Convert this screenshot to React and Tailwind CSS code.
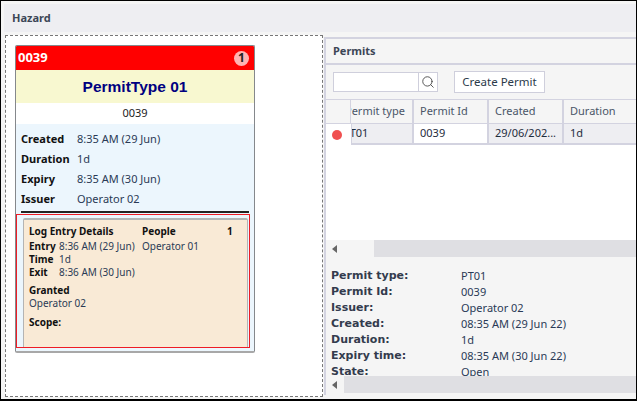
import { Search } from 'lucide-react'

function InfoRow({ label, value }) {
  return (
    <div className="flex h-[20px] items-center">
      <div className="w-[56px] font-bold text-[#111]">{label}</div>
      <div className="text-[#2a3a55]">{value}</div>
    </div>
  )
}

function LogRow({ label, value, h = 'h-[13px]' }) {
  return (
    <div className={`flex items-center ${h}`}>
      <div className="w-[30px] font-bold text-[#111]">{label}</div>
      <div className="text-[#2a3a55]">{value}</div>
    </div>
  )
}

function PermitCard() {
  return (
    <div className="ml-[9px] mt-[9px] w-[240px] h-[308px] rounded-[2px] border border-[#85888c] border-b-2 border-b-[#a8a8a8] bg-[#ecf6fd] flex flex-col overflow-hidden">
      <div className="h-[24px] bg-[#ff0000] flex items-center justify-between pl-[2px] pr-[5px]">
        <span className="text-[13px] font-bold text-white">0039</span>
        <span className="w-[15px] h-[15px] rounded-full bg-[#ffb3b3] flex items-center justify-center text-[12px] font-bold text-[#222]">1</span>
      </div>
      <div className="h-[33px] bg-[#f8f8d0] flex items-center justify-center font-['Liberation_Sans',sans-serif] text-[15.5px] font-bold text-[#000080]">
        PermitType 01
      </div>
      <div className="h-[21px] bg-white flex items-center justify-center text-[#222]">0039</div>
      <div className="px-[5px] pt-[5px] text-[11px]">
        <InfoRow label="Created" value="8:35 AM (29 Jun)" />
        <InfoRow label="Duration" value="1d" />
        <InfoRow label="Expiry" value="8:35 AM (30 Jun)" />
        <InfoRow label="Issuer" value="Operator 02" />
      </div>
      <div className="mx-[5px] mt-[2px] h-[2px] bg-[#222]" />
      <div className="mx-[0px] mt-[1px] h-[134px] border border-[#ee1c25] mr-[4px] pl-[6px] pr-[1px] pt-[3px]">
        <div className="h-full rounded-t-[2px] border border-b-0 border-[#b4b4b4] border-t-2 bg-[#f9ead6] px-[5px] pt-[4px] text-[10px] flex flex-col">
          <div className="flex font-bold text-[#111] h-[14px] items-center">
            <div className="w-[113px]">Log Entry Details</div>
            <div className="w-[85px]">People</div>
            <div>1</div>
          </div>
          <div className="flex mt-[2px]">
            <div className="w-[113px]">
              <LogRow label="Entry" value="8:36 AM (29 Jun)" />
              <LogRow label="Time" value="1d" />
              <LogRow label="Exit" value="8:36 AM (30 Jun)" />
            </div>
            <div className="text-[#2a3a55] h-[13px] flex items-center">Operator 01</div>
          </div>
          <div className="mt-[5px] font-bold text-[#111] h-[13px] flex items-center">Granted</div>
          <div className="text-[#2a3a55] h-[13px] flex items-center">Operator 02</div>
          <div className="mt-[6px] font-bold text-[#111] h-[13px] flex items-center">Scope:</div>
        </div>
      </div>
    </div>
  )
}

function GridCell({ w, children, active }) {
  return (
    <div className={`${w} h-full shrink-0 border-r-2 border-[#d3d3e0] flex items-center overflow-hidden whitespace-nowrap pl-[6px] ${active ? 'bg-white' : ''}`}>
      {children}
    </div>
  )
}

function DetailRow({ label, value }) {
  return (
    <div className="flex h-[16px] items-center">
      <div className="w-[130px] font-['DejaVu_Sans',sans-serif] text-[11px] font-bold text-[#333b4d]">{label}</div>
      <div className="text-[#2a3a55]">{value}</div>
    </div>
  )
}

function PermitsPanel() {
  return (
    <div className="ml-[1px] mt-[2px] flex-1 h-[358px] border-l-2 border-t-2 border-[#d3d3e0] bg-[#f5f5f5] flex flex-col overflow-hidden">
      <div className="h-[26px] shrink-0 border-b-2 border-[#d3d3e0] flex items-center pl-[7px] text-[11px] font-bold text-[#3c4656]">Permits</div>
      <div className="h-[34px] shrink-0 flex items-center pl-[7px] gap-[16px]">
        <div className="flex w-[105px] h-[20px] border border-[#cfcfdc] bg-white">
          <div className="flex-1 border-r border-[#cfcfdc]" />
          <div className="w-[18px] flex items-center justify-center">
            <Search size={14} strokeWidth={1.5} className="text-[#444]" />
          </div>
        </div>
        <button className="w-[91px] h-[22px] border border-[#cfcfdc] bg-white text-[11.5px] text-[#2b3a4a]">Create Permit</button>
      </div>
      <div className="h-[141px] shrink-0 bg-white flex flex-col">
        <div className="h-[25px] shrink-0 bg-[#f5f5f5] border-y border-[#d3d3e0] flex text-[#4a5568]">
          <div className="w-[25px] shrink-0 border-r border-[#d3d3e0]" />
          <div className="w-[63px] h-full shrink-0 border-r-2 border-[#d3d3e0] flex items-center overflow-hidden whitespace-nowrap">
            <span className="-ml-[6px] pl-[0px]">Permit type</span>
          </div>
          <GridCell w="w-[75px]">Permit Id</GridCell>
          <GridCell w="w-[75px]">Created</GridCell>
          <GridCell w="w-[75px]">Duration</GridCell>
        </div>
        <div className="h-[21px] shrink-0 flex text-[#1f2d3d]">
          <div className="w-[25px] shrink-0 bg-white flex items-center justify-center pr-[3px]">
            <div className="w-[10px] h-[10px] rounded-full bg-[#f05050]" />
          </div>
          <div className="flex-1 flex bg-[#eeeef2] border-l border-b-2 border-[#d3d3e0]">
            <div className="w-[62px] h-full shrink-0 border-r-2 border-[#d3d3e0] flex items-center overflow-hidden">
              <span className="-ml-[9px] whitespace-nowrap">PT01</span>
            </div>
            <GridCell w="w-[75px]" active>0039</GridCell>
            <GridCell w="w-[75px]">29/06/202...</GridCell>
            <GridCell w="w-[75px]">1d</GridCell>
          </div>
        </div>
      </div>
      <div className="h-[17px] shrink-0 bg-[#dfdfe3] flex">
        <div className="w-[48px] bg-[#f5f5f5] flex items-center pl-[6px]">
          <span className="w-0 h-0 border-y-[4px] border-y-transparent border-r-[5px] border-r-[#666]" />
        </div>
      </div>
      <div className="h-[119px] shrink-0 overflow-hidden pl-[5px] pt-[11px] text-[#2a3a55]">
        <DetailRow label="Permit type:" value="PT01" />
        <DetailRow label="Permit Id:" value="0039" />
        <DetailRow label="Issuer:" value="Operator 02" />
        <DetailRow label="Created:" value="08:35 AM (29 Jun 22)" />
        <DetailRow label="Duration:" value="1d" />
        <DetailRow label="Expiry time:" value="08:35 AM (30 Jun 22)" />
        <DetailRow label="State:" value="Open" />
      </div>
      <div className="h-[17px] shrink-0 bg-[#dfdfe3] flex">
        <div className="w-[18px] bg-[#f5f5f5] flex items-center pl-[6px]">
          <span className="w-0 h-0 border-y-[4px] border-y-transparent border-r-[5px] border-r-[#666]" />
        </div>
      </div>
    </div>
  )
}

export default function App() {
  return (
    <div className="w-[637px] h-[401px] overflow-hidden bg-[#f5f5f5] border border-black border-b-2 font-['Noto_Sans',sans-serif] text-[11px] flex flex-col">
      <div className="mt-[3px] ml-[3px] h-[28px] shrink-0 bg-[#eeeef2] flex items-center pl-[8px] text-[11px] font-bold text-[#3c4656]">Hazard</div>
      <div className="flex pl-[4px] pt-[3px]">
        <div className="w-[318px] h-[362px] border border-dashed border-[#777] bg-white shrink-0">
          <PermitCard />
        </div>
        <PermitsPanel />
      </div>
    </div>
  )
}
